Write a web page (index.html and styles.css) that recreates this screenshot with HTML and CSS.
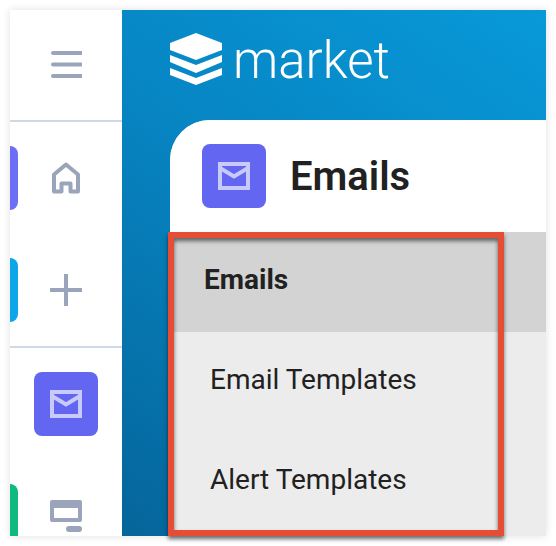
FILE: index.html
```html
<!DOCTYPE html>
<html lang="en">
  <head>
    <meta charset="utf-8">
    <title>Emails</title>
    <link rel="stylesheet" href="styles.css">
  </head>
  <body>
    <div class="frame">
      <div class="window">
        <aside class="sidebar">
          <div class="side_top">
            <svg class="icon" viewBox="0 0 32 32"><path d="M3 4H31M3 15.500H31M3 27H31"/></svg>
          </div>
          <div class="side_group">
            <div class="side_item">
              <span class="mark mark_purple"></span>
              <svg class="icon" viewBox="0 0 32 32"><path d="M4 29.500V12.500L16 2.500L28 12.500V29.500H20.500V21.500H11.500V29.500Z"/></svg>
            </div>
            <div class="side_item">
              <span class="mark mark_blue"></span>
              <svg class="icon" viewBox="0 0 32 32"><path d="M16 1V31M1 16H31"/></svg>
            </div>
          </div>
          <div class="side_group">
            <div class="side_item">
              <div class="tile">
                <svg class="mail" viewBox="0 0 32 28"><path d="M2 2H30V26H2ZM2 6L16 14.500L30 6"/></svg>
              </div>
            </div>
            <div class="side_item">
              <span class="mark mark_green"></span>
              <svg class="icon" viewBox="0 0 32 32"><path class="solid" d="M0 2Q0 0 2 0H30Q32 0 32 2V20Q32 22 30 22H2Q0 22 0 20ZM4 8V18H28V8Z"/><path class="thick" d="M19 29H29"/></svg>
            </div>
          </div>
        </aside>
        <main class="main">
          <div class="topbar">
            <svg class="logo" viewBox="0 0 52 52">
              <path d="M26 0L52 10V17L26 27L0 17V10Z"/>
              <path d="M0 22L26 32L52 22V29L26 40L0 29Z"/>
              <path d="M0 35L26 45L52 35V42L26 52L0 42Z"/>
            </svg>
            <span class="brand">market</span>
          </div>
          <section class="card">
            <div class="card_head">
              <div class="tile">
                <svg class="mail" viewBox="0 0 32 28"><path d="M2 2H30V26H2ZM2 6L16 14.500L30 6"/></svg>
              </div>
              <h1>Emails</h1>
            </div>
            <div class="menu_head">Emails</div>
            <ul class="menu">
              <li>Email Templates</li>
              <li>Alert Templates</li>
            </ul>
          </section>
        </main>
      </div>
      <div class="callout"></div>
    </div>
  </body>
</html>
```

FILE: styles.css
```css
* {margin: 0; padding: 0; box-sizing: border-box;}
body {background-color: #fff; font-family: Roboto, sans-serif; color: #212121;}
.frame {position: relative; width: 556px; height: 546px; padding: 10px;}
.window {display: flex; width: 536px; height: 526px; overflow: hidden; box-shadow: 0 0 8px rgba(0,0,0,.12);}

.sidebar {width: 112px; flex-shrink: 0; background-color: #fff;}
.side_top {display: flex; align-items: center; justify-content: center; height: 112px; border-bottom: 2px solid #cfd8e6;}
.side_group {display: flex; flex-direction: column; gap: 48px; padding: 24px 0; border-bottom: 2px solid #cfd8e6;}
.side_item {position: relative; display: flex; align-items: center; justify-content: center; height: 64px;}
.mark {position: absolute; left: 0; top: 0; width: 8px; height: 64px; border-radius: 0 8px 8px 0;}
.mark_purple {background-color: #6c6ff5;}
.mark_blue {background-color: #0ea5e9;}
.mark_green {background-color: #10b981;}
.icon {width: 32px; height: 32px; fill: none; stroke: #9aa5bb; stroke-width: 4; stroke-linecap: round; stroke-linejoin: round;}
.icon .solid {fill: #9aa5bb; fill-rule: evenodd; stroke: none;}
.icon .thick {stroke-width: 6;}

.tile {display: flex; align-items: center; justify-content: center; width: 64px; height: 64px; border-radius: 8px; background-color: #6366f1;}
.mail {width: 32px; height: 28px; fill: none; stroke: #c7cafb; stroke-width: 4;}

.main {flex: 1; display: flex; flex-direction: column; background: linear-gradient(215deg, #0899d9 0%, #0785c3 45%, #05659a 100%);}
.topbar {display: flex; align-items: center; gap: 11px; height: 110px; padding: 0 0 10px 48px;}
.logo {width: 52px; height: 52px; margin-top: -2px; fill: #fff;}
.brand {font-size: 51px; font-weight: 300; line-height: 1; color: #fff;}

.card {flex: 1; margin-left: 48px; background-color: #ececec; border-top-left-radius: 40px; overflow: hidden;}
.card_head {display: flex; align-items: center; gap: 24px; height: 112px; padding: 0 0 0 32px; background-color: #fff;}
.card_head h1 {font-size: 40px; font-weight: 600;}
.menu_head {display: flex; align-items: center; height: 100px; padding: 0 0 6px 34px; background-color: #d3d3d3; font-size: 28px; font-weight: 700;}
.menu {list-style: none;}
.menu li {display: flex; align-items: center; height: 100px; padding: 0 0 6px 40px; font-size: 28px;}

.callout {position: absolute; left: 168px; top: 232px; width: 336px; height: 304px; border: 6px solid #e54d35; box-shadow: 0 3px 4px rgba(0,0,0,.55), inset 0 3px 4px rgba(0,0,0,.55);}
```
